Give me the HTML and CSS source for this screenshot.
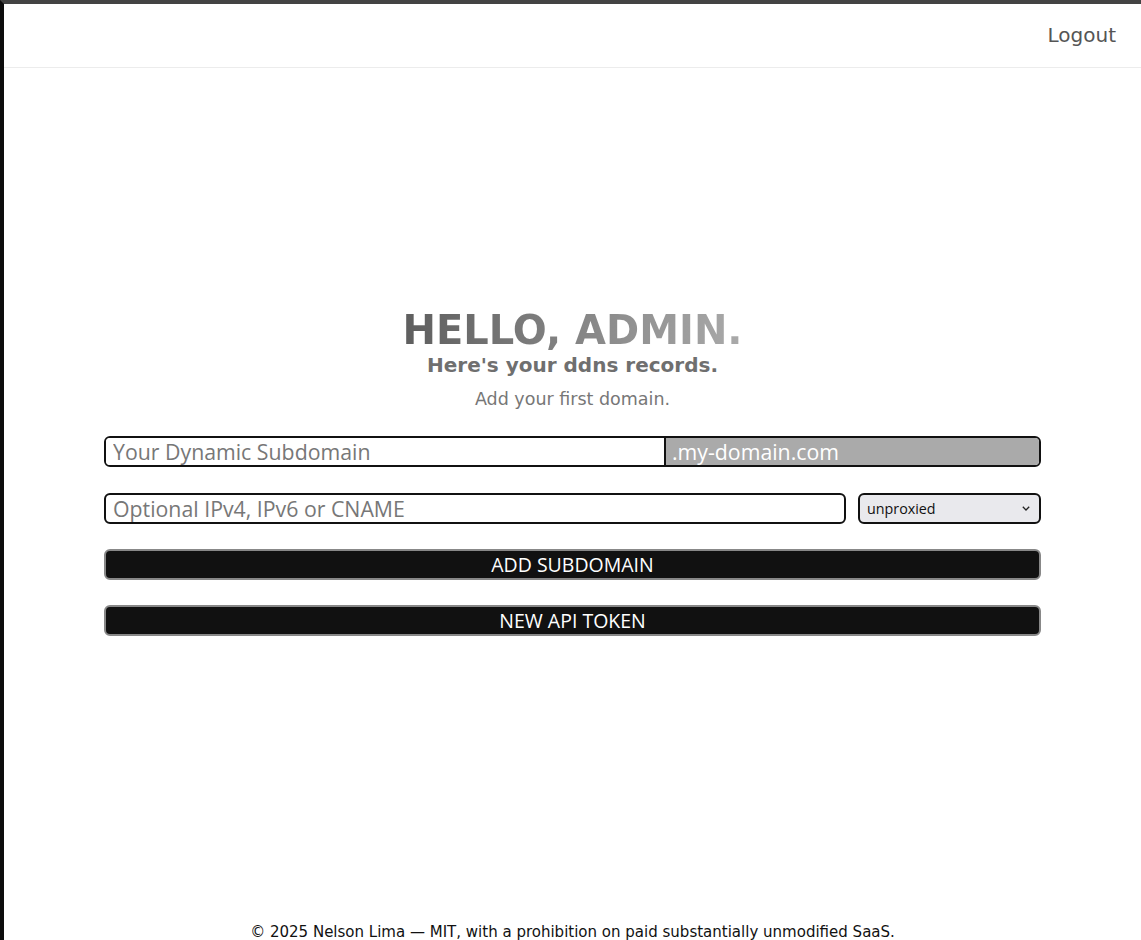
FILE: index.html
```html
<!DOCTYPE html>
<html lang="en">
<head>
<meta charset="utf-8">
<title>DDNS</title>
<link rel="stylesheet" href="styles.css">
</head>
<body>
<div class="frame">
  <header class="topbar">
    <a class="logout" href="#">Logout</a>
  </header>
  <main class="main">
    <div class="panel">
      <h1 class="hello">HELLO, ADMIN.</h1>
      <h2 class="sub">Here's your ddns records.</h2>
      <p class="hint">Add your first domain.</p>
      <form class="form">
        <div class="row domain-row">
          <input class="field domain-input" type="text" placeholder="Your Dynamic Subdomain">
          <span class="suffix">.my-domain.com</span>
        </div>
        <div class="row ip-row">
          <input class="field ip-input" type="text" placeholder="Optional IPv4, IPv6 or CNAME">
          <div class="select-wrap">
            <select class="proxy">
              <option>unproxied</option>
              <option>proxied</option>
            </select>
            <svg class="chevron" width="8" height="5" viewBox="0 0 8 5"><path d="M0.8 0.8 L4 4 L7.2 0.8" fill="none" stroke="#222" stroke-width="1.3"/></svg>
          </div>
        </div>
        <button class="btn" type="button">ADD SUBDOMAIN</button>
        <button class="btn" type="button">NEW API TOKEN</button>
      </form>
    </div>
  </main>
  <footer class="footer">© 2025 Nelson Lima — MIT, with a prohibition on paid substantially unmodified SaaS.</footer>
</div>
</body>
</html>
```
FILE: styles.css
```css
html, body {
  margin: 0;
  padding: 0;
  background: #fff;
}
body {
  font-family: "DejaVu Sans", sans-serif;
}
.frame {
  border-top: 4px solid #434343;
  border-left: 4px solid #0d0d0d;
  min-height: 1000px;
  display: flex;
  flex-direction: column;
}
.topbar {
  height: 63px;
  border-bottom: 1px solid #ececec;
  display: flex;
  align-items: center;
  justify-content: flex-end;
  padding-right: 25px;
}
.logout {
  font-family: "DejaVu Sans", sans-serif;
  font-size: 20px;
  color: #555;
  text-decoration: none;
  margin-top: -2px;
}
.main {
  display: flex;
  justify-content: center;
  padding-top: 239px;
}
.panel {
  width: 937px;
  display: flex;
  flex-direction: column;
  align-items: center;
}
.hello {
  margin: 0;
  font-family: "DejaVu Sans", sans-serif;
  font-weight: bold;
  font-size: 40px;
  line-height: 46px;
  background: linear-gradient(90deg, #5e5e5e 0%, #aaaaaa 100%);
  -webkit-background-clip: text;
  background-clip: text;
  color: transparent;
}
.sub {
  margin: 0;
  font-family: "DejaVu Sans", sans-serif;
  font-weight: bold;
  font-size: 20px;
  line-height: 24px;
  color: #6f6f6f;
}
.hint {
  margin: 12px 0 0;
  font-family: "DejaVu Sans", sans-serif;
  font-size: 17.5px;
  line-height: 21px;
  color: #777;
}
.form {
  width: 100%;
  margin-top: 26px;
  display: flex;
  flex-direction: column;
  gap: 25px;
}
.row {
  display: flex;
  height: 31px;
}
.domain-row {
  border: 2px solid #111;
  border-radius: 6px;
  overflow: hidden;
  box-sizing: border-box;
  margin-bottom: 1px;
}
.field {
  font-family: "Open Sans", sans-serif;
  font-size: 21.3px;
  color: #222;
  box-sizing: border-box;
  outline: none;
  padding: 0 7px;
}
.field::placeholder {
  color: #777;
}
.domain-input {
  border: none;
  border-right: 2px solid #111;
  width: 560px;
  height: 100%;
}
.suffix {
  flex: 1;
  background: #aaa;
  color: #fff;
  font-family: "Open Sans", sans-serif;
  font-size: 21.3px;
  line-height: 27px;
  padding-left: 6px;
}
.ip-row {
  gap: 12px;
  height: 31px;
}
.ip-input {
  flex: 1;
  border: 2px solid #111;
  border-radius: 6px;
  height: 31px;
}
.select-wrap {
  position: relative;
  width: 183px;
  height: 31px;
}
.proxy {
  -webkit-appearance: none;
  appearance: none;
  width: 100%;
  height: 31px;
  border: 2px solid #111;
  border-radius: 6px;
  background: #e9e9ed;
  font-family: "Open Sans", sans-serif;
  font-size: 14.3px;
  color: #111;
  padding: 0 7px;
  box-sizing: border-box;
  outline: none;
}
.chevron {
  position: absolute;
  right: 11px;
  top: 13px;
  pointer-events: none;
}
.btn {
  height: 31px;
  width: 100%;
  background: #111;
  color: #fff;
  border: 2px solid #888;
  border-radius: 6px;
  font-family: "Open Sans", sans-serif;
  font-size: 19.5px;
  padding: 0;
  box-sizing: border-box;
}
.footer {
  margin-top: 285px;
  text-align: center;
  font-family: "DejaVu Sans Condensed", "DejaVu Sans", sans-serif;
  font-size: 16.7px;
  color: #111;
}
```
